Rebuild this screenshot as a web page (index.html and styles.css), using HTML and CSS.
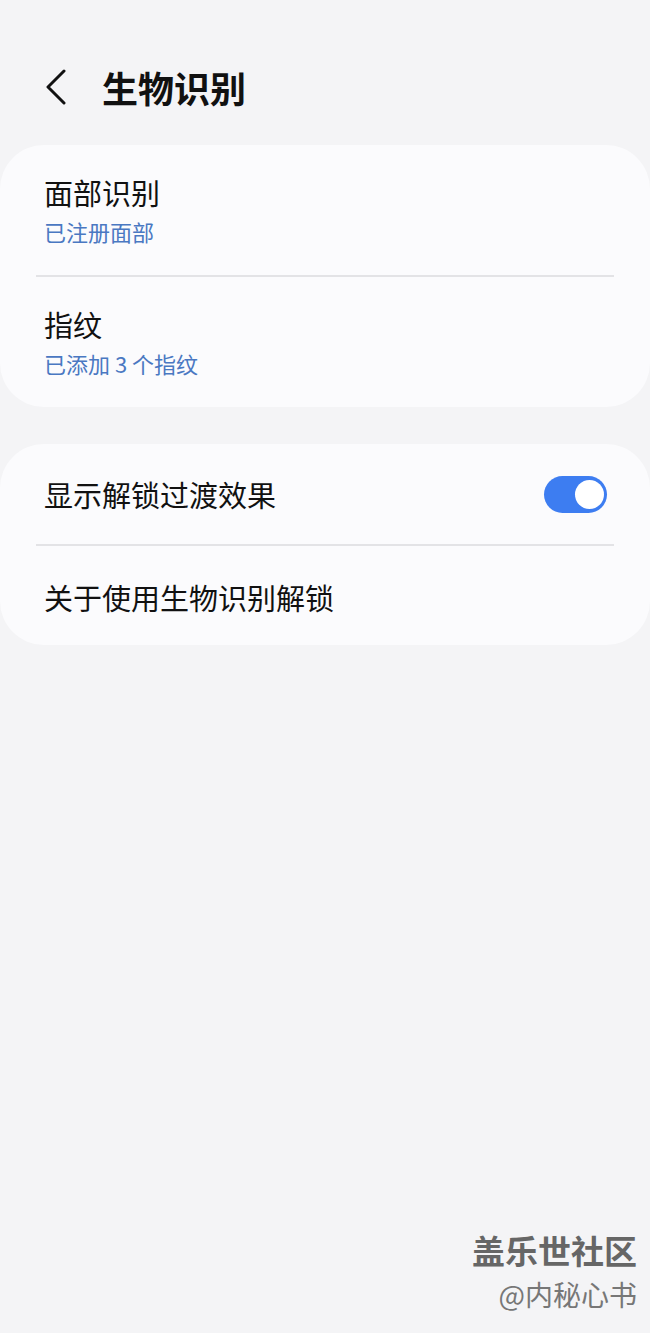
FILE: index.html
```html
<html>
    <head>
        <meta charset="utf-8">
        <meta name="viewport" content="width=device-width, initial-scale=1">
        <title>生物识别</title>
        <link rel="stylesheet" href="styles.css">
    </head>
    <body>
        <div class="header">
            <svg class="back" width="24" height="36" viewBox="0 0 24 36">
                <path d="M20 2 L4 18 L20 34" fill="none" stroke="#111" stroke-width="3" stroke-linecap="round" stroke-linejoin="round"/>
            </svg>
            <h1 class="title">生物识别</h1>
        </div>

        <div class="card">
            <div class="item">
                <div class="item-title">面部识别</div>
                <div class="item-sub">已注册面部</div>
            </div>
            <div class="divider"></div>
            <div class="item">
                <div class="item-title">指纹</div>
                <div class="item-sub">已添加 3 个指纹</div>
            </div>
        </div>

        <div class="card">
            <div class="row">
                <div class="item-title">显示解锁过渡效果</div>
                <div class="toggle"><div class="knob"></div></div>
            </div>
            <div class="divider"></div>
            <div class="row last">
                <div class="item-title">关于使用生物识别解锁</div>
            </div>
        </div>

        <!-- watermark over the page -->
        <div class="watermark">
            <div class="wm-big">盖乐世社区</div>
            <div class="wm-small">@内秘心书</div>
        </div>
    </body>
</html>
```

FILE: styles.css
```css
body {
    margin: 0;
    background-color: #f4f4f6;
    color: #111;
    font-family: "Noto Sans CJK SC", "Noto Sans", sans-serif;
    position: relative;
    min-height: 1333px;
}
.header {
    display: flex;
    align-items: center;
    height: 145px;
    padding-left: 44px;
    padding-top: 28px;
    box-sizing: border-box;
}
.back {
    margin-right: 34px;
}
.title {
    margin: 0;
    font-size: 36px;
    font-weight: 700;
    line-height: 40px;
}
.card {
    background-color: #fbfbfd;
    border-radius: 44px;
    margin-bottom: 37px;
    overflow: hidden;
}
.item {
    padding: 28px 44px 28px;
}
.item-title {
    font-size: 29px;
    line-height: 38px;
}
.item-sub {
    margin-top: 4px;
    font-size: 22px;
    line-height: 32px;
    color: #4a78c2;
}
.divider {
    height: 2px;
    background-color: #e3e3e6;
    margin: 0 36px;
}
.row {
    display: flex;
    align-items: center;
    justify-content: space-between;
    height: 100px;
    padding: 0 43px 0 44px;
}
.row.last {
    height: 99px;
    padding-top: 2px;
    box-sizing: border-box;
}
.toggle {
    width: 63px;
    height: 37px;
    border-radius: 19px;
    background-color: #3d7df1;
    display: flex;
    align-items: center;
    justify-content: flex-end;
    padding-right: 3px;
    box-sizing: border-box;
}
.knob {
    width: 29px;
    height: 29px;
    border-radius: 50%;
    background-color: #fff;
}
.watermark {
    position: absolute;
    top: 1228px;
    right: 13px;
    text-align: right;
    color: #6b6b6b;
}
.wm-big {
    font-size: 33px;
    font-weight: 700;
    line-height: 44px;
    color: #666;
}
.wm-small {
    margin-top: 2px;
    font-size: 28px;
    line-height: 40px;
    color: #777;
}
```
